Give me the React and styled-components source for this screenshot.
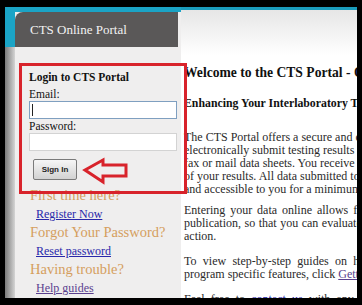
import styled, { createGlobalStyle } from "styled-components";

const GlobalStyle = createGlobalStyle`
  html, body {
    margin: 0;
    padding: 0;
    background: #000;
  }
  * {
    box-sizing: border-box;
  }
`;

const serif = `"Liberation Serif", "Times New Roman", serif`;

const Frame = styled.div`
  position: relative;
  width: 362px;
  height: 305px;
  padding: 7px 5px 7px 5px;
  background: #000;
`;

const Page = styled.div`
  display: flex;
  height: 100%;
  overflow: hidden;
  background: #fff;
`;

const Gutter = styled.div`
  width: 10px;
  flex: none;
  background:
    linear-gradient(#1ba4c6, #1ba4c6) top / 100% 40px no-repeat,
    linear-gradient(to right, #7a7a7a, #d4d4d4);
`;

const Sidebar = styled.div`
  width: 166px;
  flex: none;
  padding-top: 5px;
  background: linear-gradient(#1ba4c6 0 5px, #efeeee 5px);
`;

const SideHeader = styled.div`
  width: 163px;
  height: 35px;
  padding-left: 15px;
  border-top-left-radius: 8px;
  background: #5a5858;
  color: #f2f2f2;
  font: 13px/35px ${serif};
`;

const SideBody = styled.div`
  padding-left: 14px;
  color: #111;
  font-family: ${serif};
`;

const LoginTitle = styled.div`
  margin-top: 23px;
  font-size: 11.5px;
  font-weight: bold;
  line-height: 14px;
`;

const Label = styled.div`
  margin-top: ${(p) => p.$gap || 0}px;
  font-size: 11.5px;
  line-height: 14px;
`;

const Field = styled.div`
  display: flex;
  align-items: center;
  width: 148px;
  height: 18px;
  padding-left: 2px;
  background: #fff;
  border: 1px solid ${(p) => (p.$focused ? "#7f9fc0" : "#d3d3d3")};
`;

const Caret = styled.span`
  width: 1px;
  height: 12px;
  background: #222;
`;

const SignIn = styled.button`
  display: block;
  width: 44px;
  height: 21px;
  margin: 8px 0 0 4px;
  padding: 0;
  border: 1px solid #7a7a7a;
  border-radius: 2px;
  background: linear-gradient(#f6f6f6, #d2d2d2);
  color: #222;
  font: bold 8px "Liberation Sans", Arial, sans-serif;
`;

const HelpList = styled.div`
  margin-top: 6px;
`;

const HelpHeading = styled.div`
  padding-left: 1px;
  color: #d59e5e;
  font-size: 14.5px;
  line-height: 18.5px;
`;

const HelpLink = styled.a`
  display: block;
  padding-left: 7px;
  color: ${(p) => (p.$visited ? "#5a3f8e" : "#2828aa")};
  font-size: 12px;
  line-height: 18.5px;
  text-decoration: underline;
`;

const Main = styled.div`
  flex: 1;
  min-width: 0;
  overflow: hidden;
  padding-left: 3px;
  border-top: 3px solid #1a9cbc;
  background: linear-gradient(#e6e6e6, #fff 45px);
  font-family: ${serif};
  color: #2a2a2a;
`;

const Welcome = styled.h1`
  margin: 54px 0 0;
  font-size: 13.6px;
  line-height: 17px;
  color: #111;
  white-space: nowrap;
`;

const Subtitle = styled.h2`
  margin: 15px 0 0;
  font-size: 11.8px;
  line-height: 14px;
  color: #111;
  white-space: nowrap;
`;

const Paragraph = styled.div`
  margin-top: ${(p) => p.$gap}px;
  font-size: 12px;
  line-height: 13px;
`;

const Line = styled.div`
  white-space: nowrap;
  word-spacing: ${(p) => p.$spread || 0}px;
`;

const InlineLink = styled.a`
  color: ${(p) => (p.$visited ? "#5a3f8e" : "#2828aa")};
  text-decoration: underline;
`;

const Highlight = styled.div`
  position: absolute;
  left: 19px;
  top: 63px;
  width: 168px;
  height: 131px;
  border: 3px solid #d8232b;
  pointer-events: none;
`;

const Arrow = styled.svg`
  position: absolute;
  left: 82px;
  top: 157px;
  width: 46px;
  height: 28px;
`;

export default function App() {
  return (
    <>
      <GlobalStyle />
      <Frame>
        <Page>
          <Gutter />
          <Sidebar>
            <SideHeader>CTS Online Portal</SideHeader>
            <SideBody>
              <LoginTitle>Login to CTS Portal</LoginTitle>
              <Label $gap={3}>Email:</Label>
              <Field $focused>
                <Caret />
              </Field>
              <Label>Password:</Label>
              <Field />
              <SignIn>Sign In</SignIn>
              <HelpList>
                <HelpHeading>First time here?</HelpHeading>
                <HelpLink href="#">Register Now</HelpLink>
                <HelpHeading>Forgot Your Password?</HelpHeading>
                <HelpLink href="#">Reset password</HelpLink>
                <HelpHeading>Having trouble?</HelpHeading>
                <HelpLink href="#" $visited>
                  Help guides
                </HelpLink>
              </HelpList>
            </SideBody>
          </Sidebar>
          <Main>
            <Welcome>Welcome to the CTS Portal - Online Data Entry</Welcome>
            <Subtitle>Enhancing Your Interlaboratory Testing Experience</Subtitle>
            <Paragraph $gap={21}>
              <Line>The CTS Portal offers a secure and convenient way to</Line>
              <Line>electronically submit testing results online instead of</Line>
              <Line>fax or mail data sheets. You receive immediate feedback</Line>
              <Line>of your results. All data submitted to CTS is stored</Line>
              <Line>and accessible to you for a minimum of five years.</Line>
            </Paragraph>
            <Paragraph $gap={8}>
              <Line $spread={1.9}>Entering your data online allows for faster</Line>
              <Line $spread={0.5}>publication, so that you can evaluate results and</Line>
              <Line>action.</Line>
            </Paragraph>
            <Paragraph $gap={12}>
              <Line $spread={3.3}>To view step-by-step guides on how to use</Line>
              <Line>
                program specific features, click{" "}
                <InlineLink href="#" $visited>
                  Getting Started
                </InlineLink>
              </Line>
            </Paragraph>
            <Paragraph $gap={12}>
              <Line $spread={3.2}>
                Feel free to <InlineLink href="#">contact us</InlineLink> with any
                questions.
              </Line>
            </Paragraph>
          </Main>
        </Page>
        <Highlight />
        <Arrow viewBox="0 0 46 28">
          <polygon
            points="3,13 21,3 21,8 44,8 44,19 21,19 21,25"
            fill="none"
            stroke="#d8232b"
            strokeWidth="3"
            strokeLinejoin="miter"
          />
        </Arrow>
      </Frame>
    </>
  );
}
